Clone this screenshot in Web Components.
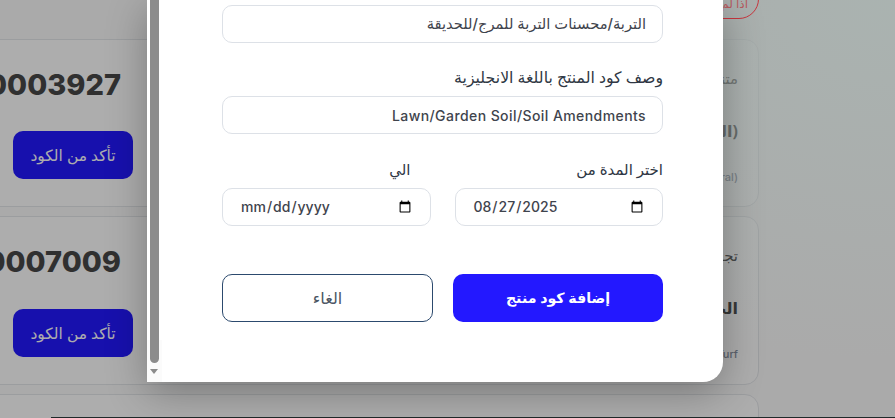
<!DOCTYPE html>
<html lang="ar">
<head>
<meta charset="utf-8">
<title>إضافة كود منتج</title>
<style>
    html, body { margin: 0; height: 100%; overflow: hidden; }
    body { font-family: "Noto Sans", "DejaVu Sans", sans-serif; }
</style>
</head>
<body>
<product-page>
    <product-card code="00003927" title-text="متنوع" name="(التربة)" sub="(General)"></product-card>
    <product-card code="00007009" title-text="تجويد" name="الحشائش" sub="Lawn/Turf"></product-card>
    <product-card></product-card>

    <code-modal slot="modal">
        <text-field style="--field-size: 14.7px" value="التربة/محسنات التربة للمرج/للحديقة"></text-field>
        <text-field style="--field-spacing: .42px" label="وصف كود المنتج باللغة الانجليزية" value="Lawn/Garden Soil/Soil Amendments"></text-field>
        <date-field slot="dates" style="--label-size: 15px" label="اختر المدة من" value="2025-08-27"></date-field>
        <date-field slot="dates" style="--label-size: 15px; --label-inset: 20px" label="الي"></date-field>
    </code-modal>
</product-page>

<script>
const FONT = '"Noto Sans", "DejaVu Sans", sans-serif';

class ProductPage extends HTMLElement {
    constructor() {
        super();
        this.attachShadow({ mode: 'open' });
        this.shadowRoot.innerHTML = `
            <style>
                :host {
                    display: block;
                    position: relative;
                    width: 895px;
                    height: 418px;
                    overflow: hidden;
                    background: #fbfbfb;
                    font-family: ${FONT};
                }
                .list {
                    display: flex;
                    flex-direction: column;
                    gap: 9px;
                    width: 819px;
                    margin-left: -60px;
                    padding-top: 38.6px;
                }
                .overlay {
                    position: absolute;
                    inset: 0;
                    background:
                        radial-gradient(520px 360px at 100% 0, rgba(170, 180, 177, .9), rgba(170, 180, 177, 0)),
                        rgba(0, 0, 0, .32);
                }
                .chip {
                    position: absolute;
                    top: -21px;
                    right: 136px;
                    width: 100px;
                    height: 38px;
                    border: 1px solid #c8363e;
                    border-radius: 20px;
                    color: #b85a5e;
                    font-size: 12px;
                    line-height: 48px;
                    direction: rtl;
                    padding-right: 10px;
                }
                .strip {
                    position: absolute;
                    left: 51px;
                    right: 0;
                    bottom: 0;
                    height: 1px;
                    background: #1f2a2a;
                }
            </style>
            <div class="list"><slot></slot></div>
            <div class="overlay"></div>
            <div class="chip">اذا لم</div>
            <div class="strip"></div>
            <slot name="modal"></slot>
        `;
    }
}

class ProductCard extends HTMLElement {
    constructor() {
        super();
        this.attachShadow({ mode: 'open' });
    }

    connectedCallback() {
        const code = this.getAttribute('code');
        this.shadowRoot.innerHTML = `
            <style>
                :host {
                    display: flex;
                    justify-content: space-between;
                    box-sizing: border-box;
                    height: 168.9px;
                    background: #fff;
                    border: 1px solid #e5e7eb;
                    border-radius: 14px;
                    flex: none;
                }
                .left {
                    display: flex;
                    flex-direction: column;
                    align-items: flex-end;
                    justify-content: space-between;
                    width: 192px;
                    padding: 26px 0 27.4px;
                }
                .code {
                    font-family: "Inter", sans-serif;
                    font-size: 29px;
                    font-weight: 800;
                    line-height: 38px;
                    color: #484848;
                    padding-right: 12px;
                }
                button {
                    width: 120px;
                    height: 48px;
                    border: 0;
                    border-radius: 10px;
                    background: #2318ff;
                    color: #fff;
                    font: 500 15.5px ${FONT};
                }
                .right {
                    direction: rtl;
                    padding: 25px 20px 0 0;
                    color: #444;
                    text-align: right;
                }
                .title { font-size: 15px; line-height: 26px; }
                .name { font-size: 16px; font-weight: 700; line-height: 26px; margin-top: 27px; }
                .sub { font-family: "Inter", sans-serif; font-size: 11px; font-weight: 500; line-height: 16px; margin-top: 25px; color: #8a93a3; }
            </style>
            ${code ? `
            <div class="left">
                <div class="code">${code}</div>
                <button>تأكد من الكود</button>
            </div>
            <div class="right">
                <div class="title">${this.getAttribute('title-text')}</div>
                <div class="name">${this.getAttribute('name')}</div>
                <div class="sub" dir="ltr">${this.getAttribute('sub')}</div>
            </div>` : ''}
        `;
    }
}

class CodeModal extends HTMLElement {
    constructor() {
        super();
        this.attachShadow({ mode: 'open' });
        this.shadowRoot.innerHTML = `
            <style>
                :host {
                    position: absolute;
                    left: 147px;
                    top: 0;
                    width: 576px;
                    height: 382px;
                    box-sizing: border-box;
                    padding: 5px 60px 0 75px;
                    background: #fff;
                    border-radius: 0 0 20px 0;
                    box-shadow: 0 10px 40px rgba(0, 0, 0, .3);
                    direction: rtl;
                    display: block;
                }
                .form { display: flex; flex-direction: column; gap: 22.4px; }
                .dates { display: grid; grid-template-columns: 1fr 1fr; gap: 24px; }
                .actions { display: grid; grid-template-columns: 210px 211px; gap: 20px; margin-top: 25.7px; }
                button {
                    height: 48px;
                    border-radius: 10px;
                    font: 400 16px ${FONT};
                    box-sizing: border-box;
                }
                .primary { background: #2318ff; border: 0; color: #fff; font-weight: 700; font-size: 14.2px; }
                .cancel { background: #fff; border: 1px solid #2c4a6e; color: #4a5563; }
                .bar {
                    position: absolute;
                    left: 0;
                    top: 0;
                    bottom: 0;
                    width: 15px;
                    background: linear-gradient(#fff 340px, #fbfbfb 340px);
                }
                .thumb {
                    position: absolute;
                    left: 3px;
                    top: 0;
                    width: 9px;
                    height: 363px;
                    background: #8c8c8c;
                    border-radius: 0 0 5px 5px;
                }
                .arrow {
                    position: absolute;
                    left: 3px;
                    top: 369px;
                    border-style: solid;
                    border-width: 5px 4.5px 0;
                    border-color: #8c8c8c transparent transparent;
                }
            </style>
            <div class="form">
                <slot></slot>
                <div class="dates"><slot name="dates"></slot></div>
                <div class="actions">
                    <button class="primary">إضافة كود منتج</button>
                    <button class="cancel">الغاء</button>
                </div>
            </div>
            <div class="bar"><div class="thumb"></div><div class="arrow"></div></div>
        `;
    }
}

const FIELD_STYLE = `
    :host { display: block; }
    label {
        display: block;
        font-size: var(--label-size, 15.75px);
        line-height: 24px;
        margin-bottom: 7px;
        padding-right: var(--label-inset, 0);
        color: #2f3744;
    }
    input {
        display: block;
        box-sizing: border-box;
        width: 100%;
        height: 38px;
        border: 1px solid #dde1e7;
        border-radius: 10px;
        background: #fff;
        color: #3f444d;
        font: 500 var(--field-size, 14px) "Inter", ${FONT};
        letter-spacing: var(--field-spacing, 0);
        padding: 0 16px;
        outline: none;
    }
`;

class TextField extends HTMLElement {
    constructor() {
        super();
        this.attachShadow({ mode: 'open' });
    }

    connectedCallback() {
        const label = this.getAttribute('label');
        this.shadowRoot.innerHTML = `
            <style>${FIELD_STYLE} input { direction: rtl; text-align: right; }</style>
            ${label ? `<label>${label}</label>` : ''}
            <input type="text" value="${this.getAttribute('value')}">
        `;
    }
}

class DateField extends HTMLElement {
    constructor() {
        super();
        this.attachShadow({ mode: 'open' });
    }

    connectedCallback() {
        this.shadowRoot.innerHTML = `
            <style>${FIELD_STYLE} input { direction: ltr; padding: 0 16px 0 17px; }</style>
            <label>${this.getAttribute('label')}</label>
            <input type="date" value="${this.getAttribute('value') || ''}">
        `;
    }
}

customElements.define('product-page', ProductPage);
customElements.define('product-card', ProductCard);
customElements.define('code-modal', CodeModal);
customElements.define('text-field', TextField);
customElements.define('date-field', DateField);
</script>
</body>
</html>
